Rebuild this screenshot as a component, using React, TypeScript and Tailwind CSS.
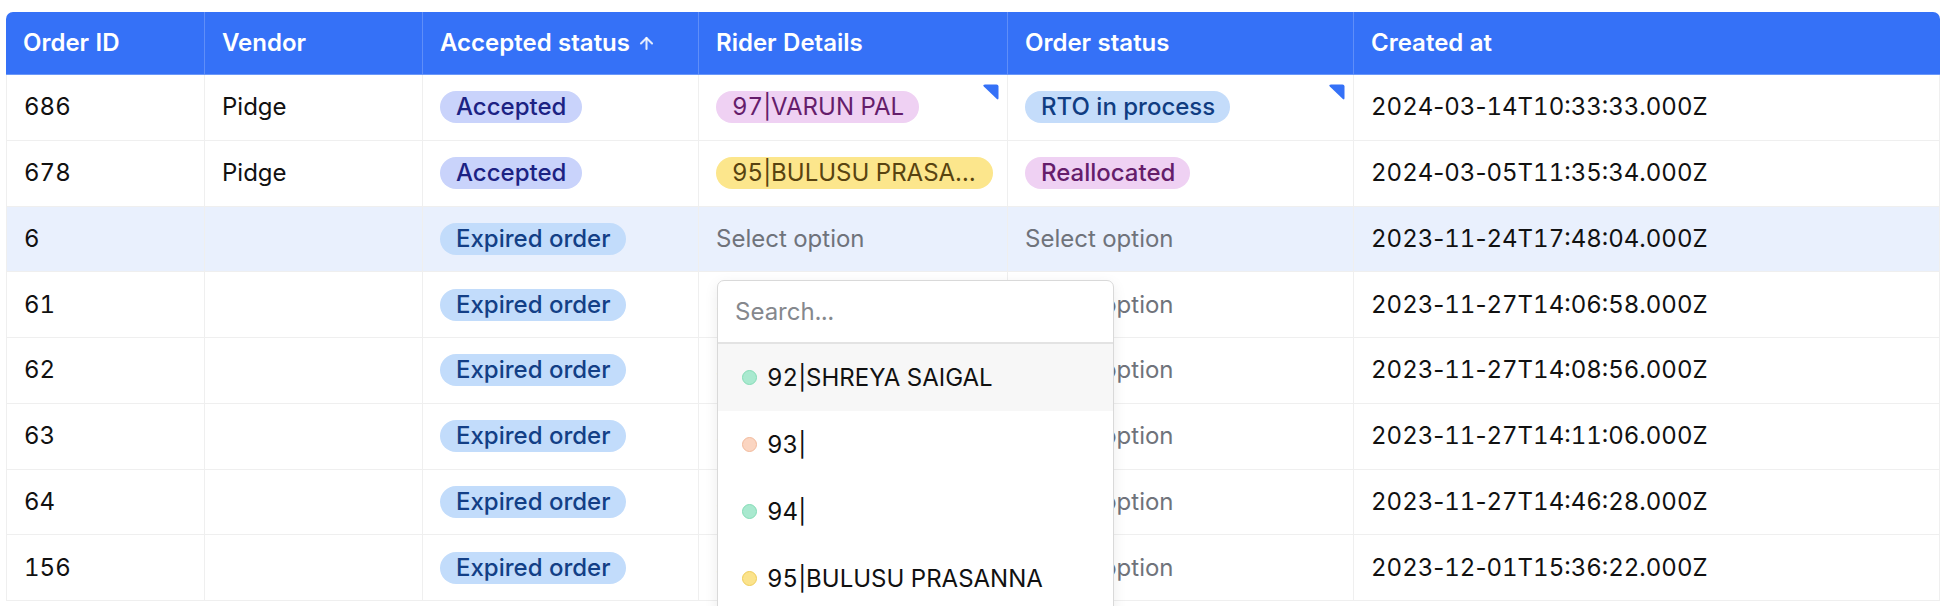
import { ArrowUp } from "lucide-react";

type Row = {
  id: string;
  vendor: string;
  accepted: "Accepted" | "Expired order";
  rider?: { text: string; tone: "purple" | "yellow" };
  order?: { text: string; tone: "blue" | "purple" };
  created: string;
  highlight?: boolean;
  marks?: boolean;
};

const rows: Row[] = [
  { id: "686", vendor: "Pidge", accepted: "Accepted", rider: { text: "97|VARUN PAL", tone: "purple" }, order: { text: "RTO in process", tone: "blue" }, created: "2024-03-14T10:33:33.000Z", marks: true },
  { id: "678", vendor: "Pidge", accepted: "Accepted", rider: { text: "95|BULUSU PRASANNA", tone: "yellow" }, order: { text: "Reallocated", tone: "purple" }, created: "2024-03-05T11:35:34.000Z" },
  { id: "6", vendor: "", accepted: "Expired order", created: "2023-11-24T17:48:04.000Z", highlight: true },
  { id: "61", vendor: "", accepted: "Expired order", created: "2023-11-27T14:06:58.000Z" },
  { id: "62", vendor: "", accepted: "Expired order", created: "2023-11-27T14:08:56.000Z" },
  { id: "63", vendor: "", accepted: "Expired order", created: "2023-11-27T14:11:06.000Z" },
  { id: "64", vendor: "", accepted: "Expired order", created: "2023-11-27T14:46:28.000Z" },
  { id: "156", vendor: "", accepted: "Expired order", created: "2023-12-01T15:36:22.000Z" },
];

const options = [
  { text: "92|SHREYA SAIGAL", dot: "bg-[#a9e9cf] border-[#84dcb6]" },
  { text: "93|", dot: "bg-[#fbd5c1] border-[#f2ba9c]" },
  { text: "94|", dot: "bg-[#a9e9cf] border-[#84dcb6]" },
  { text: "95|BULUSU PRASANNA", dot: "bg-[#fbe38c] border-[#efcd5a]" },
  { text: "96|", dot: "bg-[#c9d3fb] border-[#a7b5f5]" },
  { text: "97|VARUN PAL", dot: "bg-[#efd1f3] border-[#dcaee3]" },
];

function DateText({ v }: { v: string }) {
  const parts = v.split(/(-)/);
  return (
    <span>
      {parts.map((p, i) =>
        p === "-" ? (
          <span key={i} className="normal-nums">-</span>
        ) : (
          <span key={i}>{p}</span>
        )
      )}
    </span>
  );
}

function Corner() {
  return (
    <svg className="absolute right-[8px] top-[9px]" width="17" height="17" viewBox="0 0 17 17">
      <path d="M3 0.5 H14.5 Q16.5 0.5 16.5 2.5 V14 Q16.5 16.5 14.6 14.8 L1.8 2.4 Q0.3 0.5 3 0.5 Z" fill="#3571f7" />
    </svg>
  );
}

function AcceptedBadge({ v }: { v: Row["accepted"] }) {
  const cls =
    v === "Accepted"
      ? "bg-[#c9d3fb] text-[#1c2283]"
      : "bg-[#c2dcfb] text-[#133f86]";
  return (
    <span className={`inline-flex h-[32px] items-center rounded-full px-[16px] text-[24px] font-medium leading-none ${cls}`}>
      {v}
    </span>
  );
}

function Pill({ text, tone, weight }: { text: string; tone: "purple" | "yellow" | "blue"; weight: string }) {
  const cls =
    tone === "purple"
      ? "bg-[#efd1f3] text-[#651d6b]"
      : tone === "yellow"
      ? "bg-[#fce68c] text-[#584310]"
      : "bg-[#c4dcfa] text-[#103d82]";
  return (
    <span className={`block h-[32px] max-w-full truncate rounded-full pl-[16px] pr-[15px] text-[24px] leading-[32px] ${weight} ${cls}`}>
      {text}
    </span>
  );
}

export default function App() {
  return (
    <div className="h-[606px] w-[1946px] overflow-hidden bg-white pl-[6px] pt-[12px] font-['Inter',sans-serif] text-[24px] tabular-nums text-[#111]">
      <div className="w-[1934px]">
        {/* header */}
        <div className="grid h-[63px] grid-cols-[199px_218px_276px_309px_346px_586px] rounded-t-[7px] border-b border-[#6b98f8] bg-[#3571f7] text-white font-semibold">
          <div className="flex items-center border-r border-[#5f8ef8] pl-[17px]">Order ID</div>
          <div className="flex items-center border-r border-[#5f8ef8] pl-[17px]">Vendor</div>
          <div className="flex items-center gap-[7px] border-r border-[#5f8ef8] pl-[17px]">
            Accepted status
            <ArrowUp size={19} strokeWidth={2.6} className="text-white/85" />
          </div>
          <div className="flex items-center border-r border-[#5f8ef8] pl-[17px]">Rider Details</div>
          <div className="flex items-center border-r border-[#5f8ef8] pl-[17px]">Order status</div>
          <div className="flex items-center pl-[17px]">Created at</div>
        </div>
        {/* body */}
        <div className="border-x border-[#efefef]">
          {rows.map((r) => (
            <div
              key={r.id}
              className={`grid h-[65.75px] grid-cols-[198px_218px_276px_309px_346px_585px] border-b border-[#efefef] ${r.highlight ? "bg-[#e9f0fd]" : "bg-white"}`}
            >
              <div className="flex items-center border-r border-[#efefef] pl-[17px]">{r.id}</div>
              <div className="flex items-center border-r border-[#efefef] pl-[17px]">{r.vendor}</div>
              <div className="flex items-center border-r border-[#efefef] pl-[17px]">
                <AcceptedBadge v={r.accepted} />
              </div>
              <div className="relative flex min-w-0 items-center border-r border-[#efefef] pl-[17px] pr-[14px]">
                {r.rider ? (
                  <Pill text={r.rider.text} tone={r.rider.tone} weight="font-normal" />
                ) : (
                  <span className="text-[#6f737b]">Select option</span>
                )}
                {r.marks && <Corner />}
                {r.highlight && (
                  <div className="absolute left-[18px] top-[calc(100%+9px)] z-10 w-[397px] rounded-[7px] border border-[#d9d9d9] bg-white shadow-[0_4px_14px_rgba(0,0,0,0.08)]">
                    <div className="flex h-[63px] items-center border-b-2 border-[#e3e3e3] pl-[17px] text-[#85888d]">
                      Search...
                    </div>
                    {options.map((o, i) => (
                      <div
                        key={o.text}
                        className={`flex h-[67px] items-center pl-[24px] ${i === 0 ? "bg-[#f7f7f7]" : ""}`}
                      >
                        <span className={`mr-[10px] h-[15px] w-[15px] rounded-full border ${o.dot}`} />
                        <span className="text-[#111]">{o.text}</span>
                      </div>
                    ))}
                  </div>
                )}
              </div>
              <div className="relative flex items-center border-r border-[#efefef] pl-[17px]">
                {r.order ? (
                  <span className="inline-flex">
                    <Pill text={r.order.text} tone={r.order.tone} weight="font-medium" />
                  </span>
                ) : (
                  <span className="text-[#6f737b]">Select option</span>
                )}
                {r.marks && <Corner />}
              </div>
              <div className="flex items-center pl-[17px]">
                <DateText v={r.created} />
              </div>
            </div>
          ))}
        </div>
      </div>
    </div>
  );
}
